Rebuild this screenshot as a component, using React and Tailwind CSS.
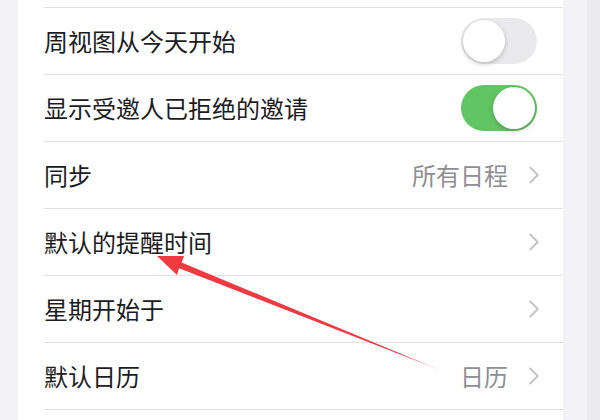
import { ChevronRight } from "lucide-react";

const rows = [
  { label: "周视图从今天开始", toggle: false },
  { label: "显示受邀人已拒绝的邀请", toggle: true },
  { label: "同步", value: "所有日程" },
  { label: "默认的提醒时间", value: "" },
  { label: "星期开始于", value: "" },
  { label: "默认日历", value: "日历" },
];

function Toggle({ on }) {
  return (
    <div
      className={
        "w-[76px] h-[46px] rounded-full p-[2px] flex " +
        (on ? "bg-[#62c563] justify-end" : "bg-[#e9e9eb] justify-start")
      }
    >
      <div className="w-[42px] h-[42px] rounded-full bg-white shadow-[0_2px_5px_rgba(0,0,0,0.2)]" />
    </div>
  );
}

function Row({ row }) {
  return (
    <div className="h-[67px] ml-[26px] pr-[26px] flex items-center border-b border-[#e2e2e6]">
      <span className="flex-1 text-[24px] text-[#1c1c1e]">{row.label}</span>
      {"toggle" in row ? (
        <Toggle on={row.toggle} />
      ) : (
        <div className="flex items-center gap-[11px]">
          <span className="text-[24px] text-[#8e8e93]">{row.value}</span>
          <ChevronRight size={30} strokeWidth={1.5} className="text-[#c4c4c8] -mr-[12px]" />
        </div>
      )}
    </div>
  );
}

export default function App() {
  return (
    <div
      className="relative w-[600px] h-[420px] overflow-hidden flex bg-[#f2f2f7]"
      style={{ fontFamily: '"PingFang SC", "Noto Sans CJK SC", sans-serif' }}
    >
      <div className="w-[18px]" />
      <div className="w-[545px] bg-white">
        <div className="h-[8px] ml-[26px] border-b border-[#e2e2e6]" />
        {rows.map((r) => (
          <Row key={r.label} row={r} />
        ))}
      </div>
      <div className="w-[24px]" />
      <div className="flex-1 bg-[#ebebf0]" />

      <svg className="absolute left-0 top-0" width="600" height="420" viewBox="0 0 600 420">
        <defs>
          <linearGradient id="ar" x1="157" y1="256" x2="440" y2="370" gradientUnits="userSpaceOnUse">
            <stop offset="0" stopColor="#ef3a3f" />
            <stop offset="0.85" stopColor="#f03a45" />
            <stop offset="1" stopColor="#f6a0a8" />
          </linearGradient>
        </defs>
        <polygon
          points="157,256 184,256 181.6,262.4 440,370 179,268.3 177,275"
          fill="url(#ar)"
        />
      </svg>
    </div>
  );
}
